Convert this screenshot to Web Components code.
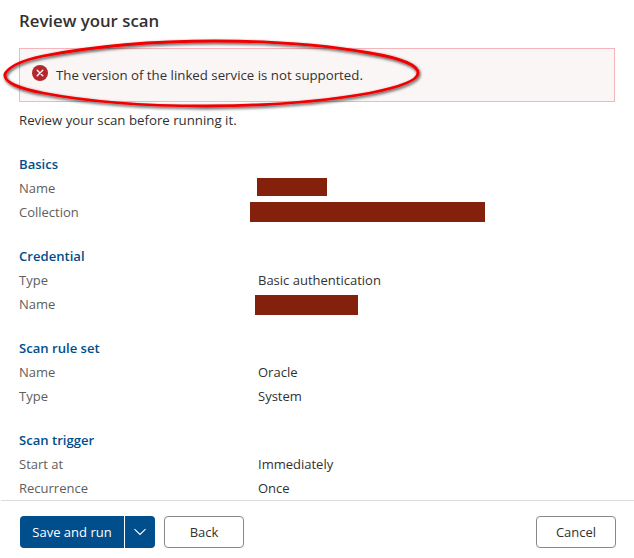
<!DOCTYPE html>
<html lang="en"><head><meta charset="utf-8"><title>Review your scan</title>
<style>
html,body{margin:0;padding:0;background:#fff;height:558px;overflow:hidden}
body{font-family:"Open Sans","Noto Sans",sans-serif;font-size:13px;color:#323130}
</style></head><body>
<scan-panel>
  <span slot="title">Review your scan</span>
  <alert-bar>The version of the linked service is not supported.</alert-bar>
  <p-line>Review your scan before running it.</p-line>
  <scan-section heading="Basics">
    <scan-row label="Name"><redact-block w="70" h="18" dx="-1" dy="-1"></redact-block></scan-row>
    <scan-row label="Collection"><redact-block w="235" h="20" dx="-8" dy="0"></redact-block></scan-row>
  </scan-section>
  <scan-section heading="Credential">
    <scan-row label="Type">Basic authentication</scan-row>
    <scan-row label="Name"><redact-block w="103" h="20" dx="-3" dy="1"></redact-block></scan-row>
  </scan-section>
  <scan-section heading="Scan rule set">
    <scan-row label="Name">Oracle</scan-row>
    <scan-row label="Type">System</scan-row>
  </scan-section>
  <scan-section heading="Scan trigger">
    <scan-row label="Start at">Immediately</scan-row>
    <scan-row label="Recurrence">Once</scan-row>
  </scan-section>
  <split-button slot="left">Save and run</split-button>
  <plain-button slot="left">Back</plain-button>
  <plain-button slot="right">Cancel</plain-button>
</scan-panel>
<script>
function def(name, html, init){
  customElements.define(name, class extends HTMLElement{
    constructor(){super();this.attachShadow({mode:'open'}).innerHTML=html;}
    connectedCallback(){ if(init) init(this,this.shadowRoot); }
  });
}
def('scan-panel',`<style>
:host{display:flex;flex-direction:column;position:relative;width:634px;height:558px;overflow:hidden}
.head{height:48px;box-sizing:border-box;padding:9px 19px 0;font-size:16.8px;font-weight:600;line-height:24px;color:#323130}
.body{height:452px;padding:0 19px;box-sizing:border-box;overflow:hidden;display:flex;flex-direction:column}
.foot{flex:none;height:58px;box-sizing:border-box;border-top:1px solid #dcdcdc;margin:0 0 0 1px;padding:15px 18px 0 19px;display:flex;justify-content:space-between}
.group{display:flex;gap:20px}
svg{position:absolute;left:0;top:30px;pointer-events:none}
</style>
<div class="head"><slot name="title"></slot></div>
<div class="body"><slot></slot></div>
<div class="foot"><div class="group"><slot name="left"></slot></div><div class="group"><slot name="right"></slot></div></div>
<svg width="440" height="90" viewBox="0 30 440 90" aria-hidden="true">
<defs><filter id="s" x="-5%" y="-20%" width="110%" height="140%"><feDropShadow dx="1" dy="1.5" stdDeviation="1.8" flood-color="#000" flood-opacity=".75"/></filter></defs>
<path d="M5 74 C9 66 24 60 43 56 C95 46 150 41 215 41 C260 41 320 44 370 53 C400 58 418 65 418 73 C418 80 400 87 370 93 C320 102 260 106 205 106 C150 106 95 103 43 93 C22 89 3 83 5 74 Z" fill="none" stroke="#f00000" stroke-width="2.8" filter="url(#s)"/>
</svg>`);
def('alert-bar',`<style>
:host{display:flex;align-items:center;gap:8px;box-sizing:border-box;width:596px;height:54px;background:#fbf6f6;border:1px solid #f5b5ba;padding:0 0 0 12px;color:#323130;flex:none;font-size:13.25px}
svg{flex:none;margin-top:-4px}
</style><svg width="16" height="16" viewBox="0 0 16 16" aria-hidden="true"><circle cx="8" cy="8" r="8" fill="#b4272d"/><path d="M5.2 5.2l5.6 5.6M10.8 5.2l-5.6 5.6" stroke="#fff" stroke-width="1.3" stroke-linecap="round"/></svg><span><slot></slot></span>`);
def('p-line',`<style>:host{display:block;flex:none;height:24px;line-height:24px;margin-top:6px;margin-bottom:20px;color:#323130;font-size:13.25px}</style><slot></slot>`);
def('scan-section',`<style>
:host{display:block;flex:none;margin-bottom:20px}
h3{margin:0;font-size:13.1px;font-weight:600;line-height:24px;color:#004e8c;height:24px}
</style><h3></h3><slot></slot>`,(el,r)=>{r.querySelector('h3').textContent=el.getAttribute('heading');});
def('scan-row',`<style>
:host{display:grid;grid-template-columns:239px 1fr;height:24px;line-height:24px;align-items:center}
.l{color:#605e5c}.v{color:#323130}
</style><div class="l"></div><div class="v"><slot></slot></div>`,(el,r)=>{r.querySelector('.l').textContent=el.getAttribute('label');});
def('redact-block',`<style>:host{display:block;background:#84210c}</style>`,(el)=>{
  el.style.width=el.getAttribute('w')+'px';el.style.height=el.getAttribute('h')+'px';
  el.style.marginLeft=el.getAttribute('dx')+'px';el.style.transform='translateY('+el.getAttribute('dy')+'px)';
});
def('plain-button',`<style>
:host{display:flex;align-items:center;justify-content:center;box-sizing:border-box;width:80px;height:32px;border:1px solid #8a8886;border-radius:4px;background:#fff;color:#323130;font-size:13px}
</style><slot></slot>`);
def('split-button',`<style>
:host{display:flex;height:32px;box-sizing:border-box;width:135px;margin-right:-11px;border-radius:4px;overflow:hidden;background:#004e8c;color:#fff;font-size:13px}
.m{width:104px;display:flex;align-items:center;justify-content:center;border-right:1px solid #fff}
.a{flex:1;display:flex;align-items:center;justify-content:center}
</style><div class="m"><slot></slot></div><div class="a"><svg width="14" height="8" viewBox="0 0 14 8" aria-hidden="true"><path d="M1.5 1.2L7 6.500l5.500-5.300" fill="none" stroke="#fff" stroke-width="1.1"/></svg></div>`);
</script>
</body></html>
